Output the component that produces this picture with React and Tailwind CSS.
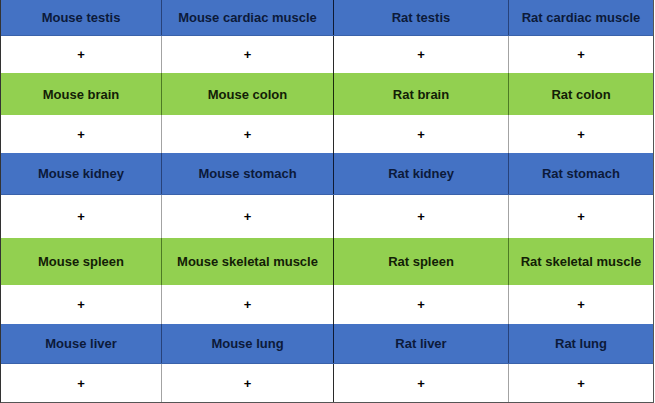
import React from "react";

const rows = [
  { type: "blue", h: "h-[36px]", cells: ["Mouse testis", "Mouse cardiac muscle", "Rat testis", "Rat cardiac muscle"] },
  { type: "white", h: "h-[37px]" },
  { type: "green", h: "h-[42px]", cells: ["Mouse brain", "Mouse colon", "Rat brain", "Rat colon"] },
  { type: "white", h: "h-[38px]" },
  { type: "blue", h: "h-[42px]", cells: ["Mouse kidney", "Mouse stomach", "Rat kidney", "Rat stomach"] },
  { type: "white", h: "h-[43px]" },
  { type: "green", h: "h-[47px]", cells: ["Mouse spleen", "Mouse skeletal muscle", "Rat spleen", "Rat skeletal muscle"] },
  { type: "white", h: "h-[39px]" },
  { type: "blue", h: "h-[40px]", cells: ["Mouse liver", "Mouse lung", "Rat liver", "Rat lung"] },
  { type: "white", h: "h-[38px]" },
];

const colBorder = {
  blue: ["border-[#27427a]", "border-[#0e1a33]", "border-[#27427a]", ""],
  green: ["border-[#4d7a24]", "border-[#1a2a0c]", "border-[#4d7a24]", ""],
  white: ["border-[#a3a3a3]", "border-[#2a2a2a]", "border-[#a3a3a3]", ""],
};

const rowStyle = {
  blue: "bg-[#4472c4] text-[#0c1a3a] border-b border-[#3a62aa]",
  green: "bg-[#92d050] text-[#122006]",
  white: "bg-white text-black",
};

export default function App() {
  return (
    <div className="w-[655px] h-[403px] bg-white" style={{ fontFamily: '"Liberation Sans", Arial, sans-serif' }}>
      <div className="w-[654px] border-l border-r border-b border-l-[#333] border-r-[#555] border-b-[#555]">
        {rows.map((r, i) => (
          <div key={i} className={`grid grid-cols-[161px_172px_175px_144px] ${r.h} ${rowStyle[r.type]}`}>
            {[0, 1, 2, 3].map((c) => (
              <div
                key={c}
                className={`flex items-center justify-center pt-px text-[13px] font-bold ${c < 3 ? "border-r" : ""} ${colBorder[r.type][c]}`}
              >
                {r.cells ? r.cells[c] : "+"}
              </div>
            ))}
          </div>
        ))}
      </div>
    </div>
  );
}
